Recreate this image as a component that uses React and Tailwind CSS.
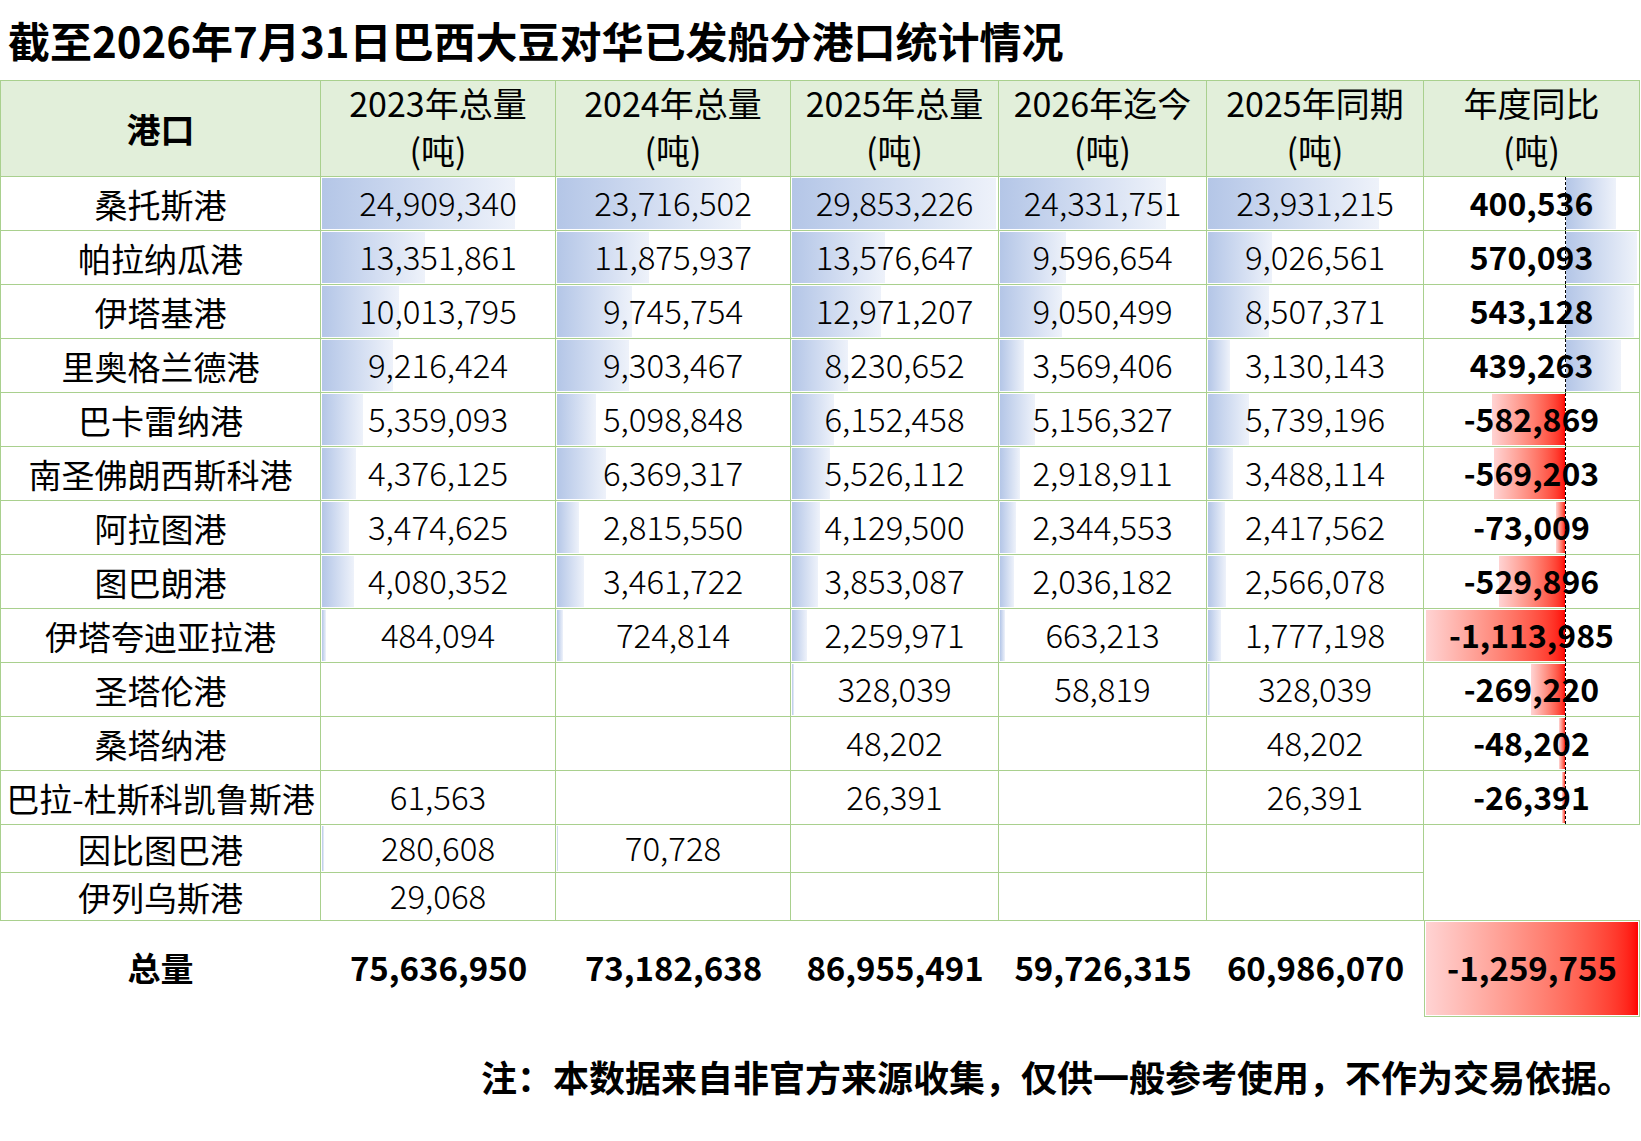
import React from "react"

const BAR_MAX = 29853226
const NEG_MAX = 1113985
const NEG_W = 139

// 列宽: 港口, 2023, 2024, 2025, 2026迄今, 2025同期, 同比
const WIDTHS = [321, 235, 235, 208, 208, 217, 216]

const rows = [
    ["桑托斯港", 24909340, 23716502, 29853226, 24331751, 23931215, 400536],
    ["帕拉纳瓜港", 13351861, 11875937, 13576647, 9596654, 9026561, 570093],
    ["伊塔基港", 10013795, 9745754, 12971207, 9050499, 8507371, 543128],
    ["里奥格兰德港", 9216424, 9303467, 8230652, 3569406, 3130143, 439263],
    ["巴卡雷纳港", 5359093, 5098848, 6152458, 5156327, 5739196, -582869],
    ["南圣佛朗西斯科港", 4376125, 6369317, 5526112, 2918911, 3488114, -569203],
    ["阿拉图港", 3474625, 2815550, 4129500, 2344553, 2417562, -73009],
    ["图巴朗港", 4080352, 3461722, 3853087, 2036182, 2566078, -529896],
    ["伊塔夸迪亚拉港", 484094, 724814, 2259971, 663213, 1777198, -1113985],
    ["圣塔伦港", null, null, 328039, 58819, 328039, -269220],
    ["桑塔纳港", null, null, 48202, null, 48202, -48202],
    ["巴拉-杜斯科凯鲁斯港", 61563, null, 26391, null, 26391, -26391],
]

const smallRows = [
    ["因比图巴港", 280608, 70728, null, null, null],
    ["伊列乌斯港", 29068, null, null, null, null],
]

const totals = [75636950, 73182638, 86955491, 59726315, 60986070]

const headers = [
    ["2023年总量", "(吨)"],
    ["2024年总量", "(吨)"],
    ["2025年总量", "(吨)"],
    ["2026年迄今", "(吨)"],
    ["2025年同期", "(吨)"],
    ["年度同比", "(吨)"],
]

const fmt = (n) => n.toLocaleString("en-US")

function ValueCell({ value, width }) {
    const barW = value ? (value / BAR_MAX) * (width - 4) : 0
    return (
        <div className="relative border-r border-b border-[#a9d08e] flex items-center justify-center pb-[3px]">
            {barW > 0 && (
                <div
                    className="absolute left-[1px] top-[1px] bottom-[1px] bg-gradient-to-r from-[#b4c6e7] to-[#eef2fa]"
                    style={{ width: barW }}
                />
            )}
            {value != null && <span className="relative text-[33px] leading-none font-light">{fmt(value)}</span>}
        </div>
    )
}

function YoyCell({ value }) {
    const w = (Math.abs(value) / NEG_MAX) * NEG_W
    return (
        <div className="relative border-r border-b border-[#a9d08e] flex items-center justify-center pb-[3px]">
            {value < 0 ? (
                <div
                    className="absolute right-[74px] top-[1px] bottom-[1px] bg-gradient-to-r from-[#ffd3d3] to-[#ff0000]"
                    style={{ width: w }}
                />
            ) : (
                <div
                    className="absolute left-[142px] top-[1px] bottom-[1px] bg-gradient-to-r from-[#b4c6e7] to-[#eef2fa]"
                    style={{ width: w }}
                />
            )}
            <span className="relative text-[32px] leading-none font-bold">{fmt(value)}</span>
            <div className="absolute left-[141px] top-0 bottom-0 border-l border-dashed border-black z-10" />
        </div>
    )
}

function PortCell({ name }) {
    return (
        <div className="border-l border-r border-b border-[#a9d08e] flex items-center justify-center pt-[2px] whitespace-nowrap">
            <span className="text-[33px] leading-none">{name}</span>
        </div>
    )
}

export default function App() {
    return (
        <div className="w-[1641px] min-h-[1141px] bg-white text-black font-['Noto_Sans_CJK_SC',sans-serif]">
            <div className="h-[80px] flex items-center pl-[8px]">
                <h1 className="text-[42px] font-bold leading-none">截至2026年7月31日巴西大豆对华已发船分港口统计情况</h1>
            </div>

            <div className="grid grid-cols-[321px_235px_235px_208px_208px_217px_216px] grid-rows-[97px_repeat(12,54px)_48px_48px_96px]">
                {/* 表头 */}
                <div className="bg-[#e2efda] border-l border-t border-r border-b border-[#a9d08e] flex items-center justify-center">
                    <span className="text-[34px] font-bold leading-none">港口</span>
                </div>
                {headers.map(([a, b]) => (
                    <div
                        key={a}
                        className="bg-[#e2efda] border-t border-r border-b border-[#a9d08e] flex flex-col items-center justify-center pb-[6px] text-[34px] leading-[47px]"
                    >
                        <span>{a}</span>
                        <span>{b}</span>
                    </div>
                ))}

                {rows.map((r) => (
                    <React.Fragment key={r[0]}>
                        <PortCell name={r[0]} />
                        {r.slice(1, 6).map((v, i) => (
                            <ValueCell key={i} value={v} width={WIDTHS[i + 1]} />
                        ))}
                        <YoyCell value={r[6]} />
                    </React.Fragment>
                ))}

                {smallRows.map((r, idx) => (
                    <React.Fragment key={r[0]}>
                        <PortCell name={r[0]} />
                        {r.slice(1, 6).map((v, i) => (
                            <ValueCell key={i} value={v} width={WIDTHS[i + 1]} />
                        ))}
                        {idx === 0 && <div className="row-span-2 border-b border-[#a9d08e]" />}
                    </React.Fragment>
                ))}

                {/* 总量 */}
                <div className="flex items-center justify-center pb-[3px]">
                    <span className="text-[33px] font-bold leading-none">总量</span>
                </div>
                {totals.map((t) => (
                    <div key={t} className="flex items-center justify-center pb-[3px]">
                        <span className="text-[33px] font-bold leading-none">{fmt(t)}</span>
                    </div>
                ))}
                <div className="relative border-l border-r border-b border-[#a9d08e] flex items-center justify-center pb-[3px]">
                    <div className="absolute inset-[1px] bg-gradient-to-r from-[#ffd3d3] to-[#ff0000]" />
                    <span className="relative text-[33px] font-bold leading-none">-1,259,755</span>
                </div>
            </div>

            <div className="mt-[34px] h-[50px] flex items-center justify-end pr-[8px]">
                <p className="text-[36px] font-bold leading-none">注：本数据来自非官方来源收集，仅供一般参考使用，不作为交易依据。</p>
            </div>
        </div>
    )
}
